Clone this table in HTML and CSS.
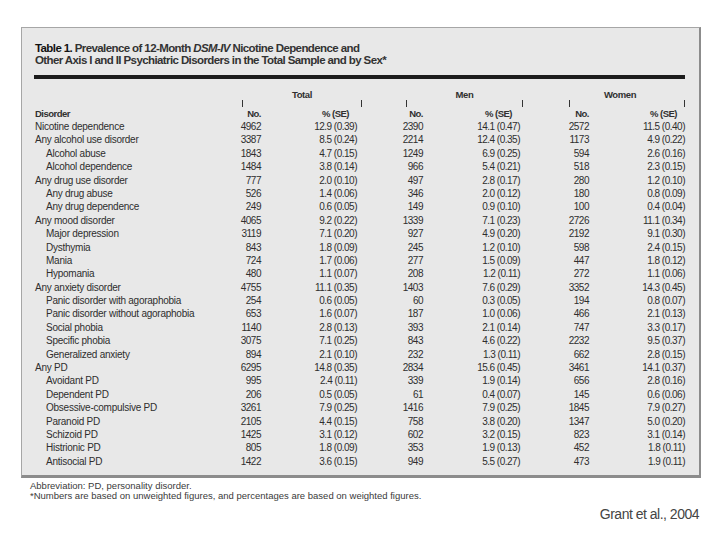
FILE: index.html
```html
<!DOCTYPE html>
<html lang="en">
<head>
<meta charset="utf-8">
<title>Table 1</title>
<link rel="stylesheet" href="styles.css">
</head>
<body>
<div class="panel">
  <div class="title"><span class="tlabel">Table 1.</span> Prevalence of 12-Month <i>DSM-IV</i> Nicotine Dependence and<br>Other Axis I and II Psychiatric Disorders in the Total Sample and by Sex*</div>
  <div class="rule"></div>
  <div class="grid groups">
    <div class="grp g-total">Total</div>
    <div class="grp g-men">Men</div>
    <div class="grp g-women">Women</div>
  </div>
  <div class="grid ticks">
    <div class="tick g-total"></div>
    <div class="tick g-men"></div>
    <div class="tick g-women"></div>
  </div>
  <div class="grid head">
    <div class="name">Disorder</div>
    <div class="num">No.</div><div class="pct">% (SE)</div>
    <div class="num">No.</div><div class="pct">% (SE)</div>
    <div class="num">No.</div><div class="pct">% (SE)</div>
  </div>
  <div class="body">
    <div class="grid row"><div class="name">Nicotine dependence</div><div class="num">4962</div><div class="pct">12.9 (0.39)</div><div class="num">2390</div><div class="pct">14.1 (0.47)</div><div class="num">2572</div><div class="pct">11.5 (0.40)</div></div>
    <div class="grid row"><div class="name">Any alcohol use disorder</div><div class="num">3387</div><div class="pct">8.5 (0.24)</div><div class="num">2214</div><div class="pct">12.4 (0.35)</div><div class="num">1173</div><div class="pct">4.9 (0.22)</div></div>
    <div class="grid row"><div class="name sub">Alcohol abuse</div><div class="num">1843</div><div class="pct">4.7 (0.15)</div><div class="num">1249</div><div class="pct">6.9 (0.25)</div><div class="num">594</div><div class="pct">2.6 (0.16)</div></div>
    <div class="grid row"><div class="name sub">Alcohol dependence</div><div class="num">1484</div><div class="pct">3.8 (0.14)</div><div class="num">966</div><div class="pct">5.4 (0.21)</div><div class="num">518</div><div class="pct">2.3 (0.15)</div></div>
    <div class="grid row"><div class="name">Any drug use disorder</div><div class="num">777</div><div class="pct">2.0 (0.10)</div><div class="num">497</div><div class="pct">2.8 (0.17)</div><div class="num">280</div><div class="pct">1.2 (0.10)</div></div>
    <div class="grid row"><div class="name sub">Any drug abuse</div><div class="num">526</div><div class="pct">1.4 (0.06)</div><div class="num">346</div><div class="pct">2.0 (0.12)</div><div class="num">180</div><div class="pct">0.8 (0.09)</div></div>
    <div class="grid row"><div class="name sub">Any drug dependence</div><div class="num">249</div><div class="pct">0.6 (0.05)</div><div class="num">149</div><div class="pct">0.9 (0.10)</div><div class="num">100</div><div class="pct">0.4 (0.04)</div></div>
    <div class="grid row"><div class="name">Any mood disorder</div><div class="num">4065</div><div class="pct">9.2 (0.22)</div><div class="num">1339</div><div class="pct">7.1 (0.23)</div><div class="num">2726</div><div class="pct">11.1 (0.34)</div></div>
    <div class="grid row"><div class="name sub">Major depression</div><div class="num">3119</div><div class="pct">7.1 (0.20)</div><div class="num">927</div><div class="pct">4.9 (0.20)</div><div class="num">2192</div><div class="pct">9.1 (0.30)</div></div>
    <div class="grid row"><div class="name sub">Dysthymia</div><div class="num">843</div><div class="pct">1.8 (0.09)</div><div class="num">245</div><div class="pct">1.2 (0.10)</div><div class="num">598</div><div class="pct">2.4 (0.15)</div></div>
    <div class="grid row"><div class="name sub">Mania</div><div class="num">724</div><div class="pct">1.7 (0.06)</div><div class="num">277</div><div class="pct">1.5 (0.09)</div><div class="num">447</div><div class="pct">1.8 (0.12)</div></div>
    <div class="grid row"><div class="name sub">Hypomania</div><div class="num">480</div><div class="pct">1.1 (0.07)</div><div class="num">208</div><div class="pct">1.2 (0.11)</div><div class="num">272</div><div class="pct">1.1 (0.06)</div></div>
    <div class="grid row"><div class="name">Any anxiety disorder</div><div class="num">4755</div><div class="pct">11.1 (0.35)</div><div class="num">1403</div><div class="pct">7.6 (0.29)</div><div class="num">3352</div><div class="pct">14.3 (0.45)</div></div>
    <div class="grid row"><div class="name sub">Panic disorder with agoraphobia</div><div class="num">254</div><div class="pct">0.6 (0.05)</div><div class="num">60</div><div class="pct">0.3 (0.05)</div><div class="num">194</div><div class="pct">0.8 (0.07)</div></div>
    <div class="grid row"><div class="name sub">Panic disorder without agoraphobia</div><div class="num">653</div><div class="pct">1.6 (0.07)</div><div class="num">187</div><div class="pct">1.0 (0.06)</div><div class="num">466</div><div class="pct">2.1 (0.13)</div></div>
    <div class="grid row"><div class="name sub">Social phobia</div><div class="num">1140</div><div class="pct">2.8 (0.13)</div><div class="num">393</div><div class="pct">2.1 (0.14)</div><div class="num">747</div><div class="pct">3.3 (0.17)</div></div>
    <div class="grid row"><div class="name sub">Specific phobia</div><div class="num">3075</div><div class="pct">7.1 (0.25)</div><div class="num">843</div><div class="pct">4.6 (0.22)</div><div class="num">2232</div><div class="pct">9.5 (0.37)</div></div>
    <div class="grid row"><div class="name sub">Generalized anxiety</div><div class="num">894</div><div class="pct">2.1 (0.10)</div><div class="num">232</div><div class="pct">1.3 (0.11)</div><div class="num">662</div><div class="pct">2.8 (0.15)</div></div>
    <div class="grid row"><div class="name">Any PD</div><div class="num">6295</div><div class="pct">14.8 (0.35)</div><div class="num">2834</div><div class="pct">15.6 (0.45)</div><div class="num">3461</div><div class="pct">14.1 (0.37)</div></div>
    <div class="grid row"><div class="name sub">Avoidant PD</div><div class="num">995</div><div class="pct">2.4 (0.11)</div><div class="num">339</div><div class="pct">1.9 (0.14)</div><div class="num">656</div><div class="pct">2.8 (0.16)</div></div>
    <div class="grid row"><div class="name sub">Dependent PD</div><div class="num">206</div><div class="pct">0.5 (0.05)</div><div class="num">61</div><div class="pct">0.4 (0.07)</div><div class="num">145</div><div class="pct">0.6 (0.06)</div></div>
    <div class="grid row"><div class="name sub">Obsessive-compulsive PD</div><div class="num">3261</div><div class="pct">7.9 (0.25)</div><div class="num">1416</div><div class="pct">7.9 (0.25)</div><div class="num">1845</div><div class="pct">7.9 (0.27)</div></div>
    <div class="grid row"><div class="name sub">Paranoid PD</div><div class="num">2105</div><div class="pct">4.4 (0.15)</div><div class="num">758</div><div class="pct">3.8 (0.20)</div><div class="num">1347</div><div class="pct">5.0 (0.20)</div></div>
    <div class="grid row"><div class="name sub">Schizoid PD</div><div class="num">1425</div><div class="pct">3.1 (0.12)</div><div class="num">602</div><div class="pct">3.2 (0.15)</div><div class="num">823</div><div class="pct">3.1 (0.14)</div></div>
    <div class="grid row"><div class="name sub">Histrionic PD</div><div class="num">805</div><div class="pct">1.8 (0.09)</div><div class="num">353</div><div class="pct">1.9 (0.13)</div><div class="num">452</div><div class="pct">1.8 (0.11)</div></div>
    <div class="grid row"><div class="name sub">Antisocial PD</div><div class="num">1422</div><div class="pct">3.6 (0.15)</div><div class="num">949</div><div class="pct">5.5 (0.27)</div><div class="num">473</div><div class="pct">1.9 (0.11)</div></div>
  </div>
</div>
<div class="notes">
  <p>Abbreviation: PD, personality disorder.</p>
  <p>*Numbers are based on unweighted figures, and percentages are based on weighted figures.</p>
</div>
<div class="credit">Grant et al., 2004</div>
</body>
</html>
```

FILE: styles.css
```css
html, body {
  margin: 0;
  padding: 0;
  background: #ffffff;
}

body {
  width: 720px;
  height: 540px;
  overflow: hidden;
  font-family: "Liberation Sans", Arial, sans-serif;
  color: #2a2a2a;
}

.panel {
  box-sizing: border-box;
  width: 680px;
  margin: 27px 0 0 21px;
  padding: 14px 14px 7px 12px;
  background: #e8e8e8;
  border-top: 1px solid #a6a6a6;
  border-left: 1px solid #a6a6a6;
  border-right: 2px solid #8c8c8c;
  border-bottom: 3px solid #8c8c8c;
}

.title {
  padding-left: 1px;
  font-size: 11.5px;
  line-height: 12px;
  font-weight: bold;
  letter-spacing: -0.6px;
  color: #333333;
  white-space: nowrap;
}

.title .tlabel {
  color: #111111;
}

.title i {
  font-style: italic;
}

.rule {
  width: 651px;
  height: 4px;
  margin-top: 9px;
  background: #1c1c1c;
}

.grid {
  display: grid;
  grid-template-columns: 198px 29px 96px 66px 97px 69px 96px;
  width: 651px;
}

.groups {
  margin-top: 10px;
  height: 11px;
  font-size: 9.5px;
  line-height: 11px;
  font-weight: bold;
  letter-spacing: -0.4px;
  color: #303030;
}

.grp {
  text-align: center;
}

.g-total {
  grid-column: 2 / 4;
  margin-left: 10px;
  margin-right: -5px;
}

.g-men {
  grid-column: 4 / 6;
  margin-left: 49px;
  margin-right: -3px;
}

.g-women {
  grid-column: 6 / 8;
  margin-left: 49px;
}

.groups .g-women {
  padding-right: 14px;
}

.ticks {
  height: 7px;
}

.tick {
  border-left: 1px solid #333333;
  border-right: 1px solid #333333;
}

.head {
  height: 13px;
  font-size: 9.5px;
  line-height: 13px;
  font-weight: bold;
  letter-spacing: -0.5px;
  color: #303030;
}

.head .name {
  padding-left: 1px;
}

.head .pct {
  padding-right: 8px;
}

.row {
  height: 13.4px;
  font-size: 10px;
  line-height: 13.4px;
  letter-spacing: -0.25px;
  color: #2e2e2e;
}

.name {
  padding-left: 1px;
  white-space: nowrap;
}

.name.sub {
  padding-left: 12px;
}

.num,
.pct {
  text-align: right;
  white-space: nowrap;
}

.row .num,
.row .pct {
  letter-spacing: -0.5px;
}

.notes {
  margin: 3px 0 0 30px;
  font-size: 9.5px;
  line-height: 10px;
  color: #3a3a3a;
}

.notes p {
  margin: 0;
  white-space: nowrap;
}

.credit {
  margin-top: 5px;
  padding-right: 21px;
  text-align: right;
  font-size: 14px;
  line-height: 16px;
  letter-spacing: -0.5px;
  color: #444444;
}
```
